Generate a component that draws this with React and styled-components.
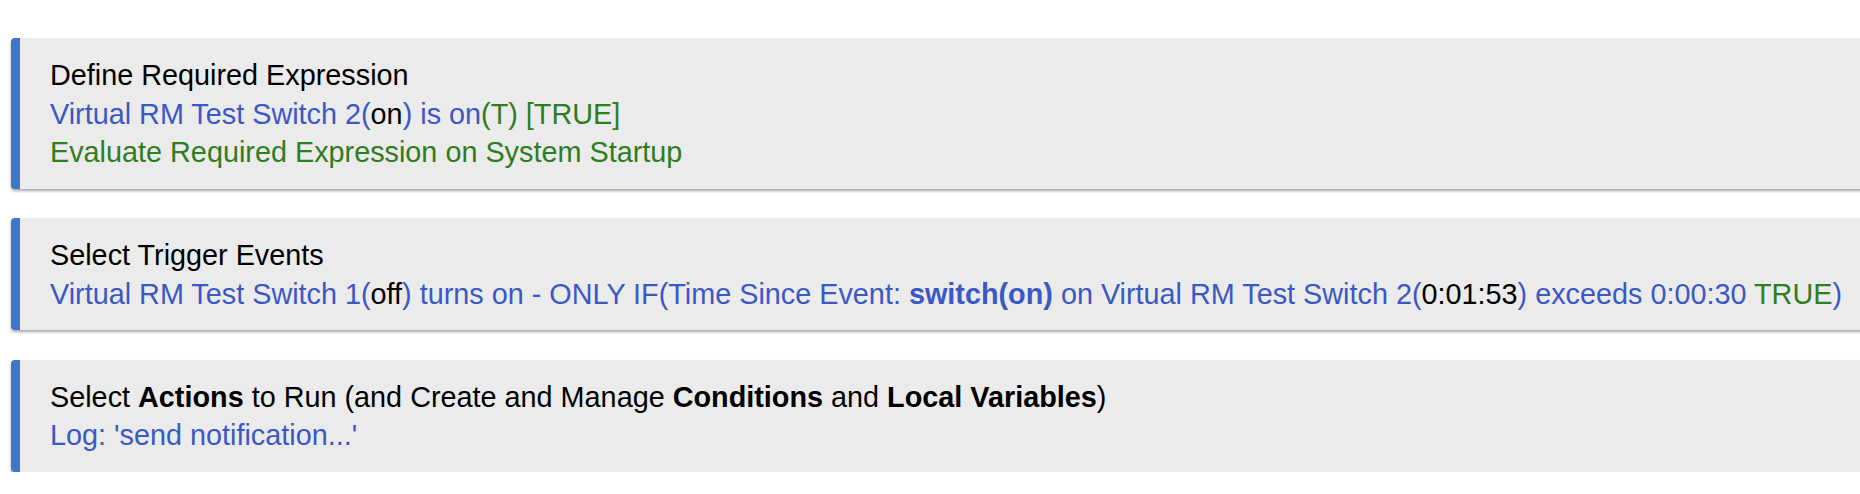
import React from "react"
import styled, { createGlobalStyle } from "styled-components"

const GlobalStyle = createGlobalStyle`
	html, body {
		margin: 0;
		padding: 0;
		background: #fff;
		overflow: hidden;
	}
`

const Page = styled.div`
	font-family: "Liberation Sans", Arial, sans-serif;
	font-size: 28.8px;
	line-height: 38.5px;
	color: #000;
	padding: 38px 0 0 11px;
	display: flex;
	flex-direction: column;
	gap: 29.5px;
	width: 1880px;
`

const Card = styled.div`
	background-color: #ebebeb;
	border-left: 9px solid #3a78c9;
	border-radius: 4px;
	box-shadow: 0 2px 3px rgba(0, 0, 0, 0.35);
	padding: 18px 30px 17px 30px;
`

const Title = styled.div`
	color: #000;
`

const Line = styled.div`
	color: ${props => props.green ? "#2f7d1f" : "#3b58c4"};
`

const Plain = styled.span`
	color: #000;
`

const Green = styled.span`
	color: #2f7d1f;
`

const App = () => {
	return (
		<>
			<GlobalStyle />
			<Page>
				<Card>
					<Title>Define Required Expression</Title>
					<Line>Virtual RM Test Switch 2(<Plain>on</Plain>) is on<Green>(T) [TRUE]</Green></Line>
					<Line green>Evaluate Required Expression on System Startup</Line>
				</Card>
				<Card>
					<Title>Select Trigger Events</Title>
					<Line>
						Virtual RM Test Switch 1(<Plain>off</Plain>) turns on - ONLY IF(Time Since Event: <b>switch(on)</b> on Virtual RM Test Switch 2(<Plain>0:01:53</Plain>) exceeds 0:00:30 <Green>TRUE</Green>)
					</Line>
				</Card>
				<Card>
					<Title>Select <b>Actions</b> to Run (and Create and Manage <b>Conditions</b> and <b>Local Variables</b>)</Title>
					<Line>Log: 'send notification...'</Line>
				</Card>
			</Page>
		</>
	)
}

export default App
